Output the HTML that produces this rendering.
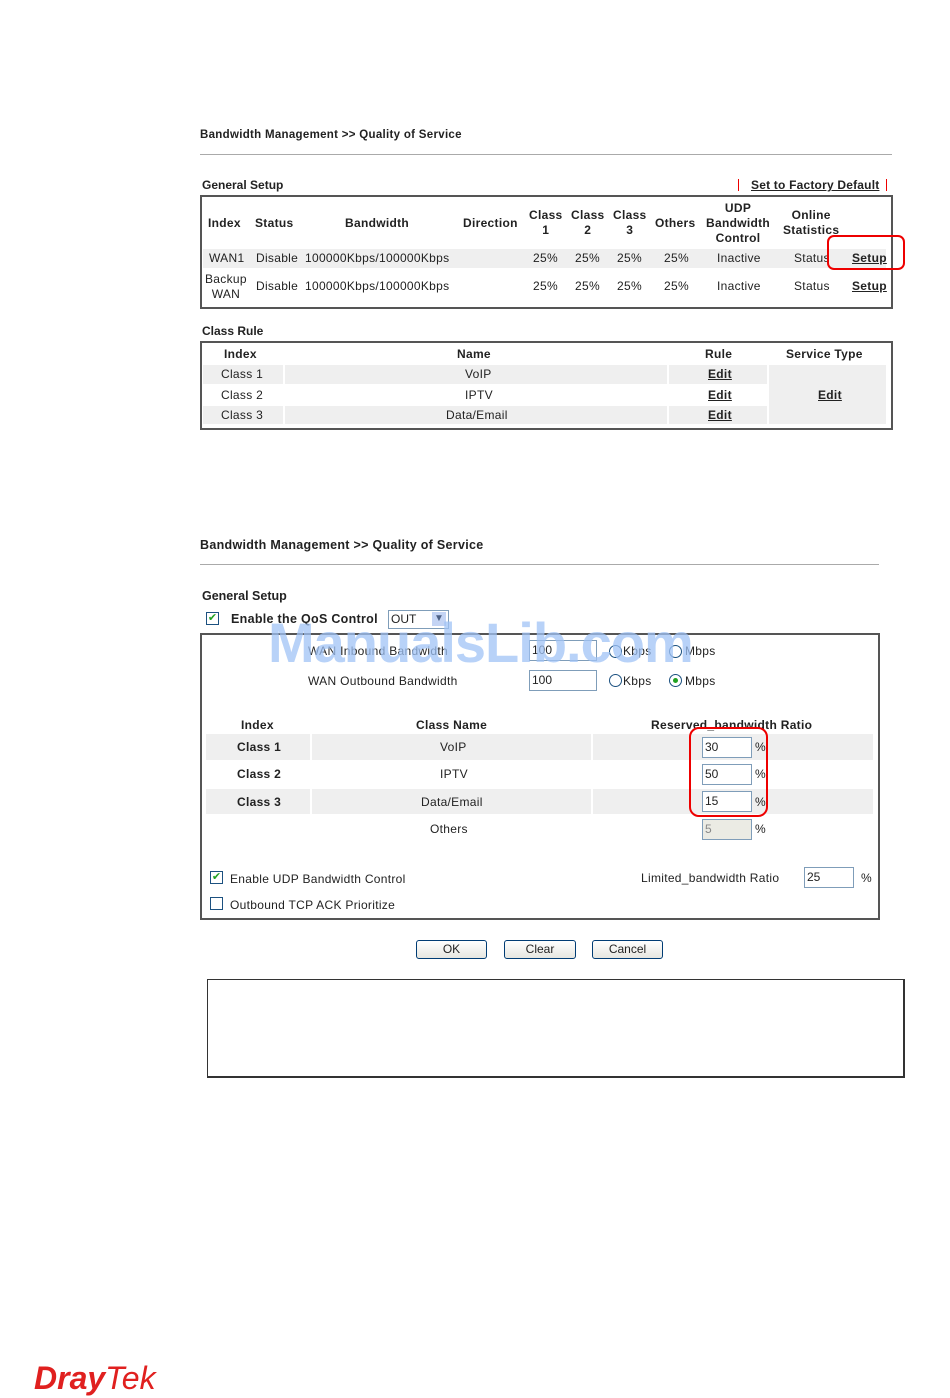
<!DOCTYPE html>
<html><head><meta charset="utf-8"><style>
body{margin:0;width:950px;height:1398px;background:#fff;position:relative;font-family:"Liberation Sans",sans-serif;color:#222;overflow:hidden}
.a{position:absolute;white-space:nowrap}
.b{font-weight:bold}
.s{font-size:12px;letter-spacing:0.3px}
.g{background:#efefef}
.u{text-decoration:underline;font-weight:bold}
.in{position:absolute;border:1px solid #7f9db9;background:#fff;font-size:12px;padding-left:2px;box-sizing:border-box;height:21px;line-height:19px}
.btn{position:absolute;border:1px solid #003c74;border-radius:3px;background:linear-gradient(#fff,#e6e6e0);font-size:12px;text-align:center;height:19px;line-height:17px;box-sizing:border-box}
.cb{position:absolute;width:11px;height:11px;border:1px solid #1c5180;background:#fff;font-size:11px;line-height:10px;color:#21a121;text-align:center}
.rad{position:absolute;width:11px;height:11px;border:1px solid #1c5180;border-radius:50%;background:#fff}
</style></head><body>

<div class="a b" style="left:200px;top:129px;font-size:11.5px;letter-spacing:0.3px">Bandwidth Management &gt;&gt; Quality of Service</div>
<div class="a" style="left:200px;top:154px;width:692px;border-top:1px solid #aaa"></div>

<div class="a b" style="left:202px;top:178px;font-size:12px">General Setup</div>
<div class="a" style="left:738px;top:179px;width:1px;height:12px;background:#e00"></div>
<div class="a u" style="left:751px;top:178px;font-size:12px;letter-spacing:0.2px">Set to Factory Default</div>
<div class="a" style="left:886px;top:179px;width:1px;height:12px;background:#e00"></div>

<div class="a" style="left:200px;top:195px;width:689px;height:110px;border:2px solid #555"></div>
<div class="a b s" style="left:208px;top:216px">Index</div>
<div class="a b s" style="left:255px;top:216px">Status</div>
<div class="a b s" style="left:345px;top:216px">Bandwidth</div>
<div class="a b s" style="left:463px;top:216px">Direction</div>
<div class="a b s" style="left:529px;top:208px;text-align:center;line-height:15px">Class<br>1</div>
<div class="a b s" style="left:571px;top:208px;text-align:center;line-height:15px">Class<br>2</div>
<div class="a b s" style="left:613px;top:208px;text-align:center;line-height:15px">Class<br>3</div>
<div class="a b s" style="left:655px;top:216px">Others</div>
<div class="a b s" style="left:706px;top:201px;text-align:center;line-height:15px">UDP<br>Bandwidth<br>Control</div>
<div class="a b s" style="left:783px;top:208px;text-align:center;line-height:15px">Online<br>Statistics</div>

<div class="a g" style="left:203px;top:249px;width:683px;height:19px"></div>
<div class="a s" style="left:209px;top:251px">WAN1</div>
<div class="a s" style="left:256px;top:251px">Disable</div>
<div class="a s" style="left:305px;top:251px">100000Kbps/100000Kbps</div>
<div class="a s" style="left:533px;top:251px">25%</div>
<div class="a s" style="left:575px;top:251px">25%</div>
<div class="a s" style="left:617px;top:251px">25%</div>
<div class="a s" style="left:664px;top:251px">25%</div>
<div class="a s" style="left:717px;top:251px">Inactive</div>
<div class="a s" style="left:794px;top:251px">Status</div>
<div class="a s u" style="left:852px;top:251px">Setup</div>

<div class="a s" style="left:205px;top:272px;text-align:center;line-height:15px">Backup<br>WAN</div>
<div class="a s" style="left:256px;top:279px">Disable</div>
<div class="a s" style="left:305px;top:279px">100000Kbps/100000Kbps</div>
<div class="a s" style="left:533px;top:279px">25%</div>
<div class="a s" style="left:575px;top:279px">25%</div>
<div class="a s" style="left:617px;top:279px">25%</div>
<div class="a s" style="left:664px;top:279px">25%</div>
<div class="a s" style="left:717px;top:279px">Inactive</div>
<div class="a s" style="left:794px;top:279px">Status</div>
<div class="a s u" style="left:852px;top:279px">Setup</div>
<div class="a" style="left:827px;top:235px;width:74px;height:31px;border:2px solid #e00;border-radius:7px"></div>

<div class="a b" style="left:202px;top:324px;font-size:12px">Class Rule</div>
<div class="a" style="left:200px;top:341px;width:689px;height:85px;border:2px solid #555"></div>
<div class="a b s" style="left:224px;top:347px">Index</div>
<div class="a b s" style="left:457px;top:347px">Name</div>
<div class="a b s" style="left:705px;top:347px">Rule</div>
<div class="a b s" style="left:786px;top:347px">Service Type</div>
<div class="a g" style="left:203px;top:365px;width:80px;height:19px"></div>
<div class="a g" style="left:285px;top:365px;width:382px;height:19px"></div>
<div class="a g" style="left:669px;top:365px;width:98px;height:19px"></div>
<div class="a g" style="left:769px;top:365px;width:117px;height:59px"></div>
<div class="a g" style="left:203px;top:406px;width:80px;height:18px"></div>
<div class="a g" style="left:285px;top:406px;width:382px;height:18px"></div>
<div class="a g" style="left:669px;top:406px;width:98px;height:18px"></div>
<div class="a s" style="left:221px;top:367px">Class 1</div>
<div class="a s" style="left:221px;top:388px">Class 2</div>
<div class="a s" style="left:221px;top:408px">Class 3</div>
<div class="a s" style="left:465px;top:367px">VoIP</div>
<div class="a s" style="left:465px;top:388px">IPTV</div>
<div class="a s" style="left:446px;top:408px">Data/Email</div>
<div class="a s u" style="left:708px;top:367px">Edit</div>
<div class="a s u" style="left:708px;top:388px">Edit</div>
<div class="a s u" style="left:708px;top:408px">Edit</div>
<div class="a s u" style="left:818px;top:388px">Edit</div>

<div class="a b" style="left:200px;top:538px;font-size:12.5px;letter-spacing:0.3px">Bandwidth Management &gt;&gt; Quality of Service</div>
<div class="a" style="left:200px;top:564px;width:679px;border-top:1px solid #aaa"></div>
<div class="a b" style="left:202px;top:589px;font-size:12.5px">General Setup</div>
<div class="cb" style="left:206px;top:612px">✔</div>
<div class="a b" style="left:231px;top:612px;font-size:12.5px;letter-spacing:0.3px">Enable the QoS Control</div>
<div class="in" style="left:388px;top:610px;width:61px;height:19px;line-height:17px">OUT</div>
<div class="a" style="left:432px;top:612px;width:14px;height:14px;background:#c4d4f4;color:#4d6185;font-size:10px;text-align:center;line-height:14px">▼</div>

<div class="a" style="left:200px;top:633px;width:676px;height:283px;border:2px solid #555"></div>
<div class="a s" style="left:308px;top:644px">WAN Inbound Bandwidth</div>
<div class="in" style="left:529px;top:640px;width:68px">100</div>
<div class="rad" style="left:609px;top:645px"></div><div class="a s" style="left:623px;top:644px">Kbps</div>
<div class="rad" style="left:669px;top:645px"></div><div class="a s" style="left:685px;top:644px">Mbps</div>
<div class="a s" style="left:308px;top:674px">WAN Outbound Bandwidth</div>
<div class="in" style="left:529px;top:670px;width:68px">100</div>
<div class="rad" style="left:609px;top:674px"></div><div class="a s" style="left:623px;top:674px">Kbps</div>
<div class="rad" style="left:669px;top:674px"><div style="position:absolute;left:3px;top:3px;width:5px;height:5px;border-radius:50%;background:#21a121"></div></div><div class="a s" style="left:685px;top:674px">Mbps</div>

<div class="a" style="left:268px;top:610px;font-size:56px;font-weight:bold;color:rgba(160,195,245,0.75);letter-spacing:-1px">ManualsLib.com</div>

<div class="a b s" style="left:241px;top:718px">Index</div>
<div class="a b s" style="left:416px;top:718px">Class Name</div>
<div class="a b s" style="left:651px;top:718px">Reserved_bandwidth Ratio</div>
<div class="a g" style="left:206px;top:734px;width:104px;height:26px"></div>
<div class="a g" style="left:312px;top:734px;width:279px;height:26px"></div>
<div class="a g" style="left:593px;top:734px;width:280px;height:26px"></div>
<div class="a g" style="left:206px;top:789px;width:104px;height:25px"></div>
<div class="a g" style="left:312px;top:789px;width:279px;height:25px"></div>
<div class="a g" style="left:593px;top:789px;width:280px;height:25px"></div>
<div class="a b s" style="left:237px;top:740px">Class 1</div>
<div class="a b s" style="left:237px;top:767px">Class 2</div>
<div class="a b s" style="left:237px;top:795px">Class 3</div>
<div class="a s" style="left:440px;top:740px">VoIP</div>
<div class="a s" style="left:440px;top:767px">IPTV</div>
<div class="a s" style="left:421px;top:795px">Data/Email</div>
<div class="a s" style="left:430px;top:822px">Others</div>
<div class="in" style="left:702px;top:737px;width:50px">30</div><div class="a s" style="left:755px;top:740px">%</div>
<div class="in" style="left:702px;top:764px;width:50px">50</div><div class="a s" style="left:755px;top:767px">%</div>
<div class="in" style="left:702px;top:791px;width:50px">15</div><div class="a s" style="left:755px;top:795px">%</div>
<div class="in" style="left:702px;top:819px;width:50px;background:#ebebe4;color:#888">5</div><div class="a s" style="left:755px;top:822px">%</div>
<div class="a" style="left:689px;top:727px;width:75px;height:86px;border:2px solid #e00;border-radius:10px"></div>

<div class="cb" style="left:210px;top:871px">✔</div>
<div class="a s" style="left:230px;top:872px">Enable UDP Bandwidth Control</div>
<div class="a s" style="left:641px;top:871px">Limited_bandwidth Ratio</div>
<div class="in" style="left:804px;top:867px;width:50px">25</div>
<div class="a s" style="left:861px;top:871px">%</div>
<div class="cb" style="left:210px;top:897px"></div>
<div class="a s" style="left:230px;top:898px">Outbound TCP ACK Prioritize</div>

<div class="btn" style="left:416px;top:940px;width:71px">OK</div>
<div class="btn" style="left:504px;top:940px;width:72px">Clear</div>
<div class="btn" style="left:592px;top:940px;width:71px">Cancel</div>

<div class="a" style="left:207px;top:979px;width:695px;height:96px;border:1px solid #333;border-right:2px solid #333;border-bottom:2px solid #333"></div>

<div class="a" style="left:34px;top:1360px;font-size:32px;font-weight:bold;font-style:italic;color:#e0201f;letter-spacing:0px">Dray<span style="font-weight:normal">Tek</span></div>
</body></html>
